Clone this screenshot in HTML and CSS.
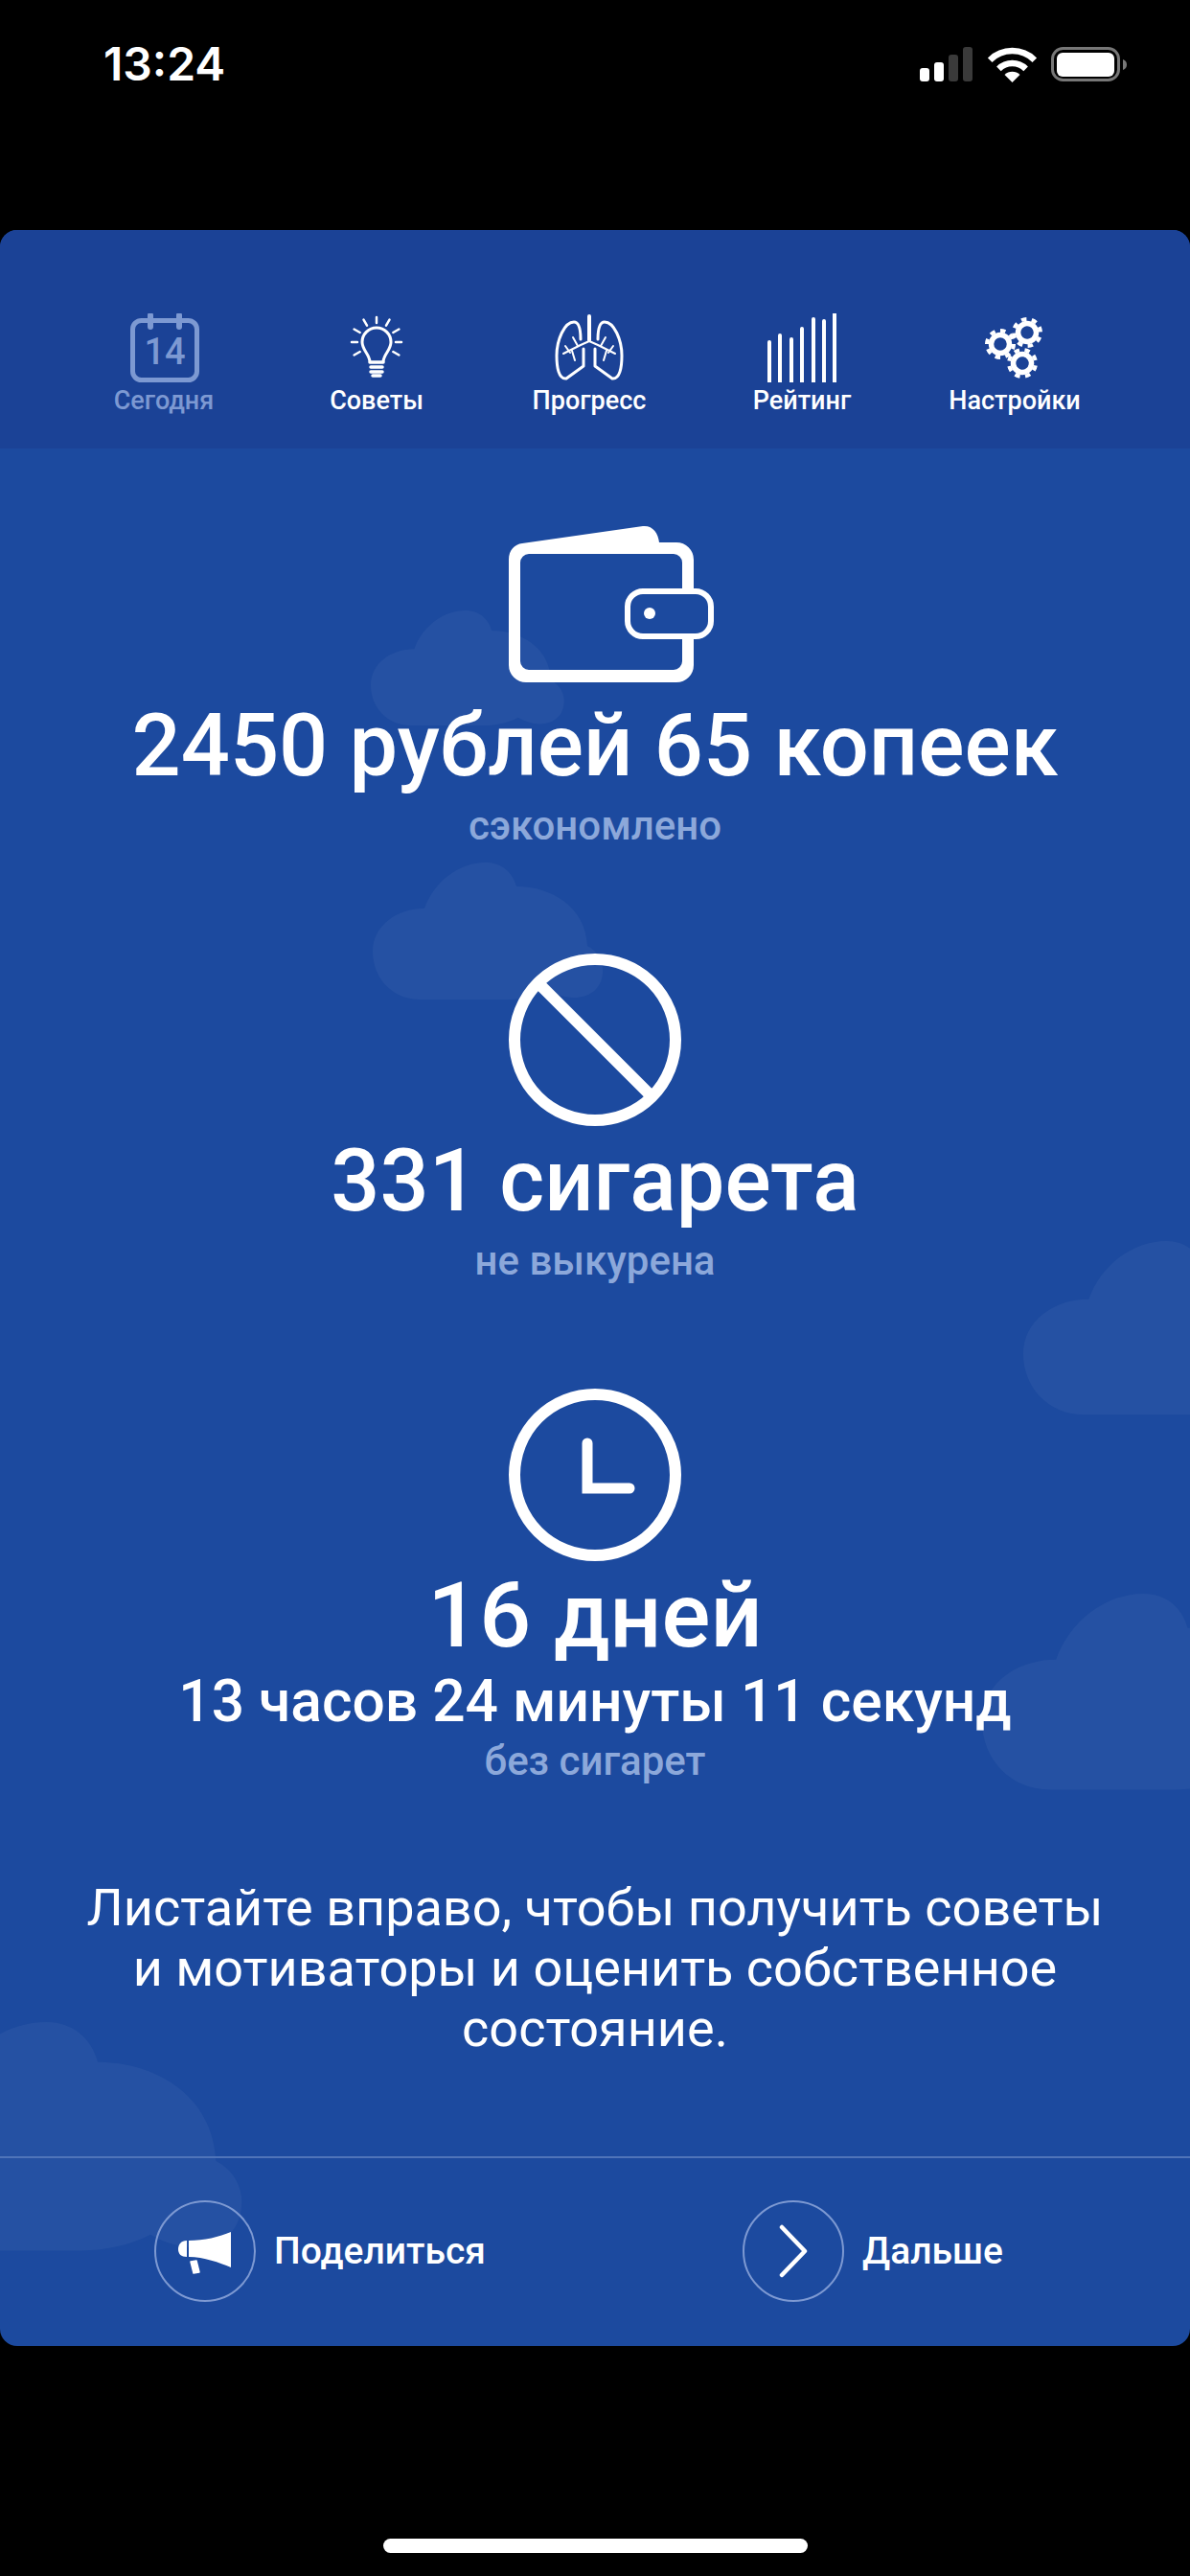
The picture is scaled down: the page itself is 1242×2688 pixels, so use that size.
FILE: index.html
```html
<!DOCTYPE html>
<html lang="ru">
<head>
    <meta charset="UTF-8">
    <title>Сегодня</title>
    <link rel="stylesheet" href="styles.css">
</head>
<body>
    <svg class="defs" width="0" height="0">
        <defs>
            <path id="cloud" d="M54 48C64 20 90 0 118 0C134 0 146 10 150 25C185 25 222 45 224 87C236 93 241 105 240 115C239 132 226 141 210 141C200 141 190 137 183 133C172 139 155 143 140 143L50 143C20 143 0 120 0 93C0 66 25 48 54 48Z"/>
            <g id="gear">
                <circle r="9.5" fill="none" stroke="#fff" stroke-width="5.5"/>
                <circle r="14" fill="none" stroke="#fff" stroke-width="4" pathLength="80" stroke-dasharray="5 5"/>
            </g>
        </defs>
    </svg>

    <div class="status">
        <span class="status-time">13:24</span>
        <div class="status-icons">
            <svg class="icon-signal" width="56" height="36" viewBox="0 0 56 36">
                <rect x="0" y="22" width="10" height="14" rx="3" fill="#fff"/>
                <rect x="15" y="16" width="10" height="20" rx="3" fill="#fff"/>
                <rect x="30" y="8" width="10" height="28" rx="3" fill="#3a3a3a"/>
                <rect x="45" y="0" width="10" height="36" rx="3" fill="#3a3a3a"/>
            </svg>
            <svg class="icon-wifi" width="54" height="38" viewBox="0 0 54 38">
                <path d="M3.2 13.7A33 33 0 0 1 49.8 13.7" fill="none" stroke="#fff" stroke-width="6.5"/>
                <path d="M12.4 22.9A20 20 0 0 1 40.6 22.9" fill="none" stroke="#fff" stroke-width="6.5"/>
                <path d="M26.5 37L18.5 29A11.3 11.3 0 0 1 34.5 29Z" fill="#fff"/>
            </svg>
            <svg class="icon-battery" width="80" height="38" viewBox="0 0 80 38">
                <rect x="1.5" y="1.5" width="69" height="33" rx="11" fill="none" stroke="#777" stroke-width="3"/>
                <rect x="6" y="6" width="60" height="25" rx="6" fill="#fff"/>
                <path d="M75 13C78 14 79 16 79 18.500C79 21 78 23 75 24Z" fill="#777"/>
            </svg>
        </div>
    </div>

    <div class="card">
        <!-- clouds sit under everything in the card -->
        <svg class="clouds" width="1242" height="2208" viewBox="0 240 1242 2208">
            <use href="#cloud" transform="translate(387 637) scale(.84)"/>
            <use href="#cloud" transform="translate(389 900)"/>
            <use href="#cloud" transform="translate(1068 1295) scale(1.266)"/>
            <use href="#cloud" transform="translate(1025 1663) scale(1.43)"/>
            <use href="#cloud" transform="translate(-148 2110) scale(1.667)"/>
        </svg>

        <nav class="nav">
            <div class="nav-item nav-item-active">
                <svg width="80" height="72" viewBox="0 0 80 72">
                    <rect x="7.500" y="7.500" width="67" height="62" rx="9" fill="none" stroke="#7d99d2" stroke-width="5"/>
                    <path d="M26 2V14M56 2V14" stroke="#7d99d2" stroke-width="6" stroke-linecap="round"/>
                    <text x="41" y="53" text-anchor="middle" class="cal-day">14</text>
                </svg>
                <span>Сегодня</span>
            </div>
            <div class="nav-item">
                <svg width="60" height="72" viewBox="0 0 60 72" fill="none" stroke="#fff" stroke-linecap="round">
                    <g stroke-width="2.500">
                        <path d="M30 10V4M40 12.700L43.500 6.600M20 12.700L16.500 6.600M47.300 20L53.400 16.500M12.700 20L6.600 16.500M50 30H56M10 30H4M47.300 40L53.400 43.500M12.700 40L6.600 43.500"/>
                    </g>
                    <path d="M23 50C22 42 15 38 15 30A15 15 0 0 1 45 30C45 38 38 42 37 50" stroke-width="3"/>
                    <path d="M23 51H37M24 56H36M24 61H36" stroke-width="3.500"/>
                    <path d="M26 65H34" stroke-width="3.500"/>
                </svg>
                <span>Советы</span>
            </div>
            <div class="nav-item">
                <svg width="80" height="72" viewBox="0 0 80 72" fill="none" stroke="#fff" stroke-linecap="round" stroke-linejoin="round">
                    <path d="M40 3V28" stroke-width="4"/>
                    <path d="M31 27C31 15 29 9 24 9C14 9 6 28 6 44C6 56 8 69 16 68L34 55V37" stroke-width="3"/>
                    <path d="M49 27C49 15 51 9 56 9C66 9 74 28 74 44C74 56 72 69 64 68L46 55V37" stroke-width="3"/>
                    <path d="M40 29L31 33L13 42M23 25L28 34M20 41L15 34M22 39L25 49M40 29L49 33L67 42M57 25L52 34M60 41L65 34M58 39L55 49" stroke-width="2"/>
                </svg>
                <span>Прогресс</span>
            </div>
            <div class="nav-item">
                <svg width="76" height="72" viewBox="0 0 76 72" fill="none" stroke="#fff" stroke-width="4" stroke-linecap="round">
                    <path d="M4 30V72M15 23V72M27 27V72M38 16V72M50 6V72M61 8V72M72 1V72"/>
                </svg>
                <span>Рейтинг</span>
            </div>
            <div class="nav-item">
                <svg width="70" height="72" viewBox="0 0 70 72">
                    <use href="#gear" transform="translate(20 32)"/>
                    <use href="#gear" transform="translate(48 20) rotate(20)"/>
                    <use href="#gear" transform="translate(43 52) rotate(10)"/>
                </svg>
                <span>Настройки</span>
            </div>
        </nav>

        <main class="stats">
            <section class="stat">
                <svg class="stat-icon" width="250" height="180" viewBox="-5 1 250 180">
                    <path d="M30 44C30 34 36 28 44 27L170 9C180 8 186 16 187 26H205A18 18 0 0 1 223 44V154A18 18 0 0 1 205 172H48A18 18 0 0 1 30 154ZM51 38A9 9 0 0 0 42 47V150A9 9 0 0 0 51 159H202A9 9 0 0 0 211 150V47A9 9 0 0 0 202 38Z" fill="#fff" fill-rule="evenodd"/>
                    <rect x="154" y="77" width="87" height="47" rx="16" fill="#1c4a9f" stroke="#fff" stroke-width="6"/>
                    <circle cx="177" cy="100" r="6" fill="#fff"/>
                </svg>
                <div class="stat-value">2450 рублей 65 копеек</div>
                <div class="stat-label">сэкономлено</div>
            </section>

            <section class="stat">
                <svg class="stat-icon" width="180" height="180" viewBox="0 0 180 180" fill="none" stroke="#fff" stroke-width="12">
                    <circle cx="90" cy="90" r="84"/>
                    <path d="M31 31L149 149"/>
                </svg>
                <div class="stat-value">331 сигарета</div>
                <div class="stat-label">не выкурена</div>
            </section>

            <section class="stat stat-last">
                <svg class="stat-icon" width="180" height="180" viewBox="0 0 180 180" fill="none" stroke="#fff" stroke-width="12">
                    <circle cx="90" cy="90" r="84"/>
                    <path d="M82 57V104H126" stroke-width="11" stroke-linecap="round"/>
                </svg>
                <div class="stat-value stat-value-big">16 дней</div>
                <div class="stat-sub">13 часов 24 минуты 11 секунд</div>
                <div class="stat-label stat-label-tight">без сигарет</div>
            </section>

            <p class="hint">Листайте вправо, чтобы получить советы<br>и мотиваторы и оценить собственное<br>состояние.</p>
        </main>

        <footer class="actions">
            <div class="action action-share">
                <div class="action-circle">
                    <svg width="70" height="55" viewBox="0 0 70 55" fill="#fff">
                        <path d="M16 16C10 16 7 20 7 25C7 30 10 33 16 33Z"/>
                        <path d="M18 16C34 16 50 12 62 7V44C50 39 34 33 18 33Z"/>
                        <path d="M20 38L26 37L29 49L23 50Z" stroke="#fff" stroke-width="1.500" stroke-linejoin="round"/>
                    </svg>
                </div>
                <span>Поделиться</span>
            </div>
            <div class="action">
                <div class="action-circle">
                    <svg width="34" height="56" viewBox="0 0 34 56" fill="none" stroke="#fff" stroke-width="4.500" stroke-linecap="round" stroke-linejoin="round">
                        <path d="M5 3L29 28L5 53" />
                    </svg>
                </div>
                <span>Дальше</span>
            </div>
        </footer>
    </div>

    <div class="home-bar"></div>
</body>
</html>
```

FILE: styles.css
```css
body {
    margin: 0;
    width: 1242px;
    height: 2688px;
    background-color: #000;
    font-family: Roboto, sans-serif;
    color: #fff;
    overflow: hidden;
}

.defs {
    display: block;
    height: 0;
}

.status {
    height: 240px;
    display: flex;
    justify-content: space-between;
    align-items: flex-start;
    padding: 0 65px 0 108px;
    box-sizing: border-box;
}

.status-time {
    margin-top: 38px;
    font-family: Inter, sans-serif;
    font-size: 48px;
    line-height: 58px;
    font-weight: 600;
}

.status-icons {
    display: flex;
    align-items: flex-start;
    margin-top: 49px;
}

.icon-wifi {
    margin-left: 14px;
}

.icon-battery {
    margin-left: 13px;
}

.card {
    position: relative;
    height: 2208px;
    border-radius: 18px;
    background-color: #1c4a9f;
    overflow: hidden;
    display: flex;
    flex-direction: column;
}

.clouds {
    position: absolute;
    left: 0;
    top: 0;
    fill: #fff;
    fill-opacity: 0.045;
}

.nav {
    position: relative;
    height: 228px;
    box-sizing: border-box;
    padding: 87px 72px 0 60px;
    display: grid;
    grid-template-columns: repeat(5, 222px);
    background-color: #1b4296;
}

.nav-item {
    display: flex;
    flex-direction: column;
    align-items: center;
    font-size: 27px;
    font-weight: 500;
    line-height: 32px;
}

.nav-item svg {
    display: block;
    height: 72px;
}

.nav-item span {
    margin-top: 3px;
}

.nav-item-active {
    color: #7d99d2;
}

.cal-day {
    font-family: Roboto, sans-serif;
    font-size: 38px;
    font-weight: 500;
    fill: #7d99d2;
}

.stats {
    position: relative;
    flex: 1;
    display: flex;
    flex-direction: column;
    align-items: center;
    padding-top: 73px;
}

.stat {
    display: flex;
    flex-direction: column;
    align-items: center;
    margin-bottom: 103px;
}

.stat-last {
    margin-bottom: 91px;
}

.stat-icon {
    display: block;
}

.stat-value {
    margin-top: 8px;
    font-size: 90px;
    line-height: 100px;
    font-weight: 500;
}

.stat-value-big {
    margin-top: 7px;
    font-size: 95px;
}

.stat-sub {
    margin-top: 5px;
    font-size: 60.5px;
    line-height: 70px;
    font-weight: 500;
}

.stat-label {
    margin-top: 3px;
    font-size: 42px;
    line-height: 60px;
    font-weight: 500;
    color: #8ca8da;
}

.stat-label-tight {
    margin-top: -3px;
}

.hint {
    margin: 0;
    font-size: 54px;
    line-height: 63px;
    text-align: center;
}

.actions {
    position: relative;
    height: 198px;
    box-sizing: border-box;
    border-top: 2px solid #4f74b9;
    padding: 44px 0 0 161px;
    display: flex;
}

.action {
    display: flex;
    align-items: center;
    gap: 19px;
    height: 106px;
    font-size: 39px;
    font-weight: 500;
}

.action-share {
    width: 614px;
}

.action-circle {
    width: 106px;
    height: 106px;
    box-sizing: border-box;
    border: 2.5px solid #7d99d2;
    border-radius: 50%;
    display: flex;
    align-items: center;
    justify-content: center;
}

.home-bar {
    width: 443px;
    height: 15px;
    margin: 201px auto 0;
    border-radius: 8px;
    background-color: #fff;
}
```
